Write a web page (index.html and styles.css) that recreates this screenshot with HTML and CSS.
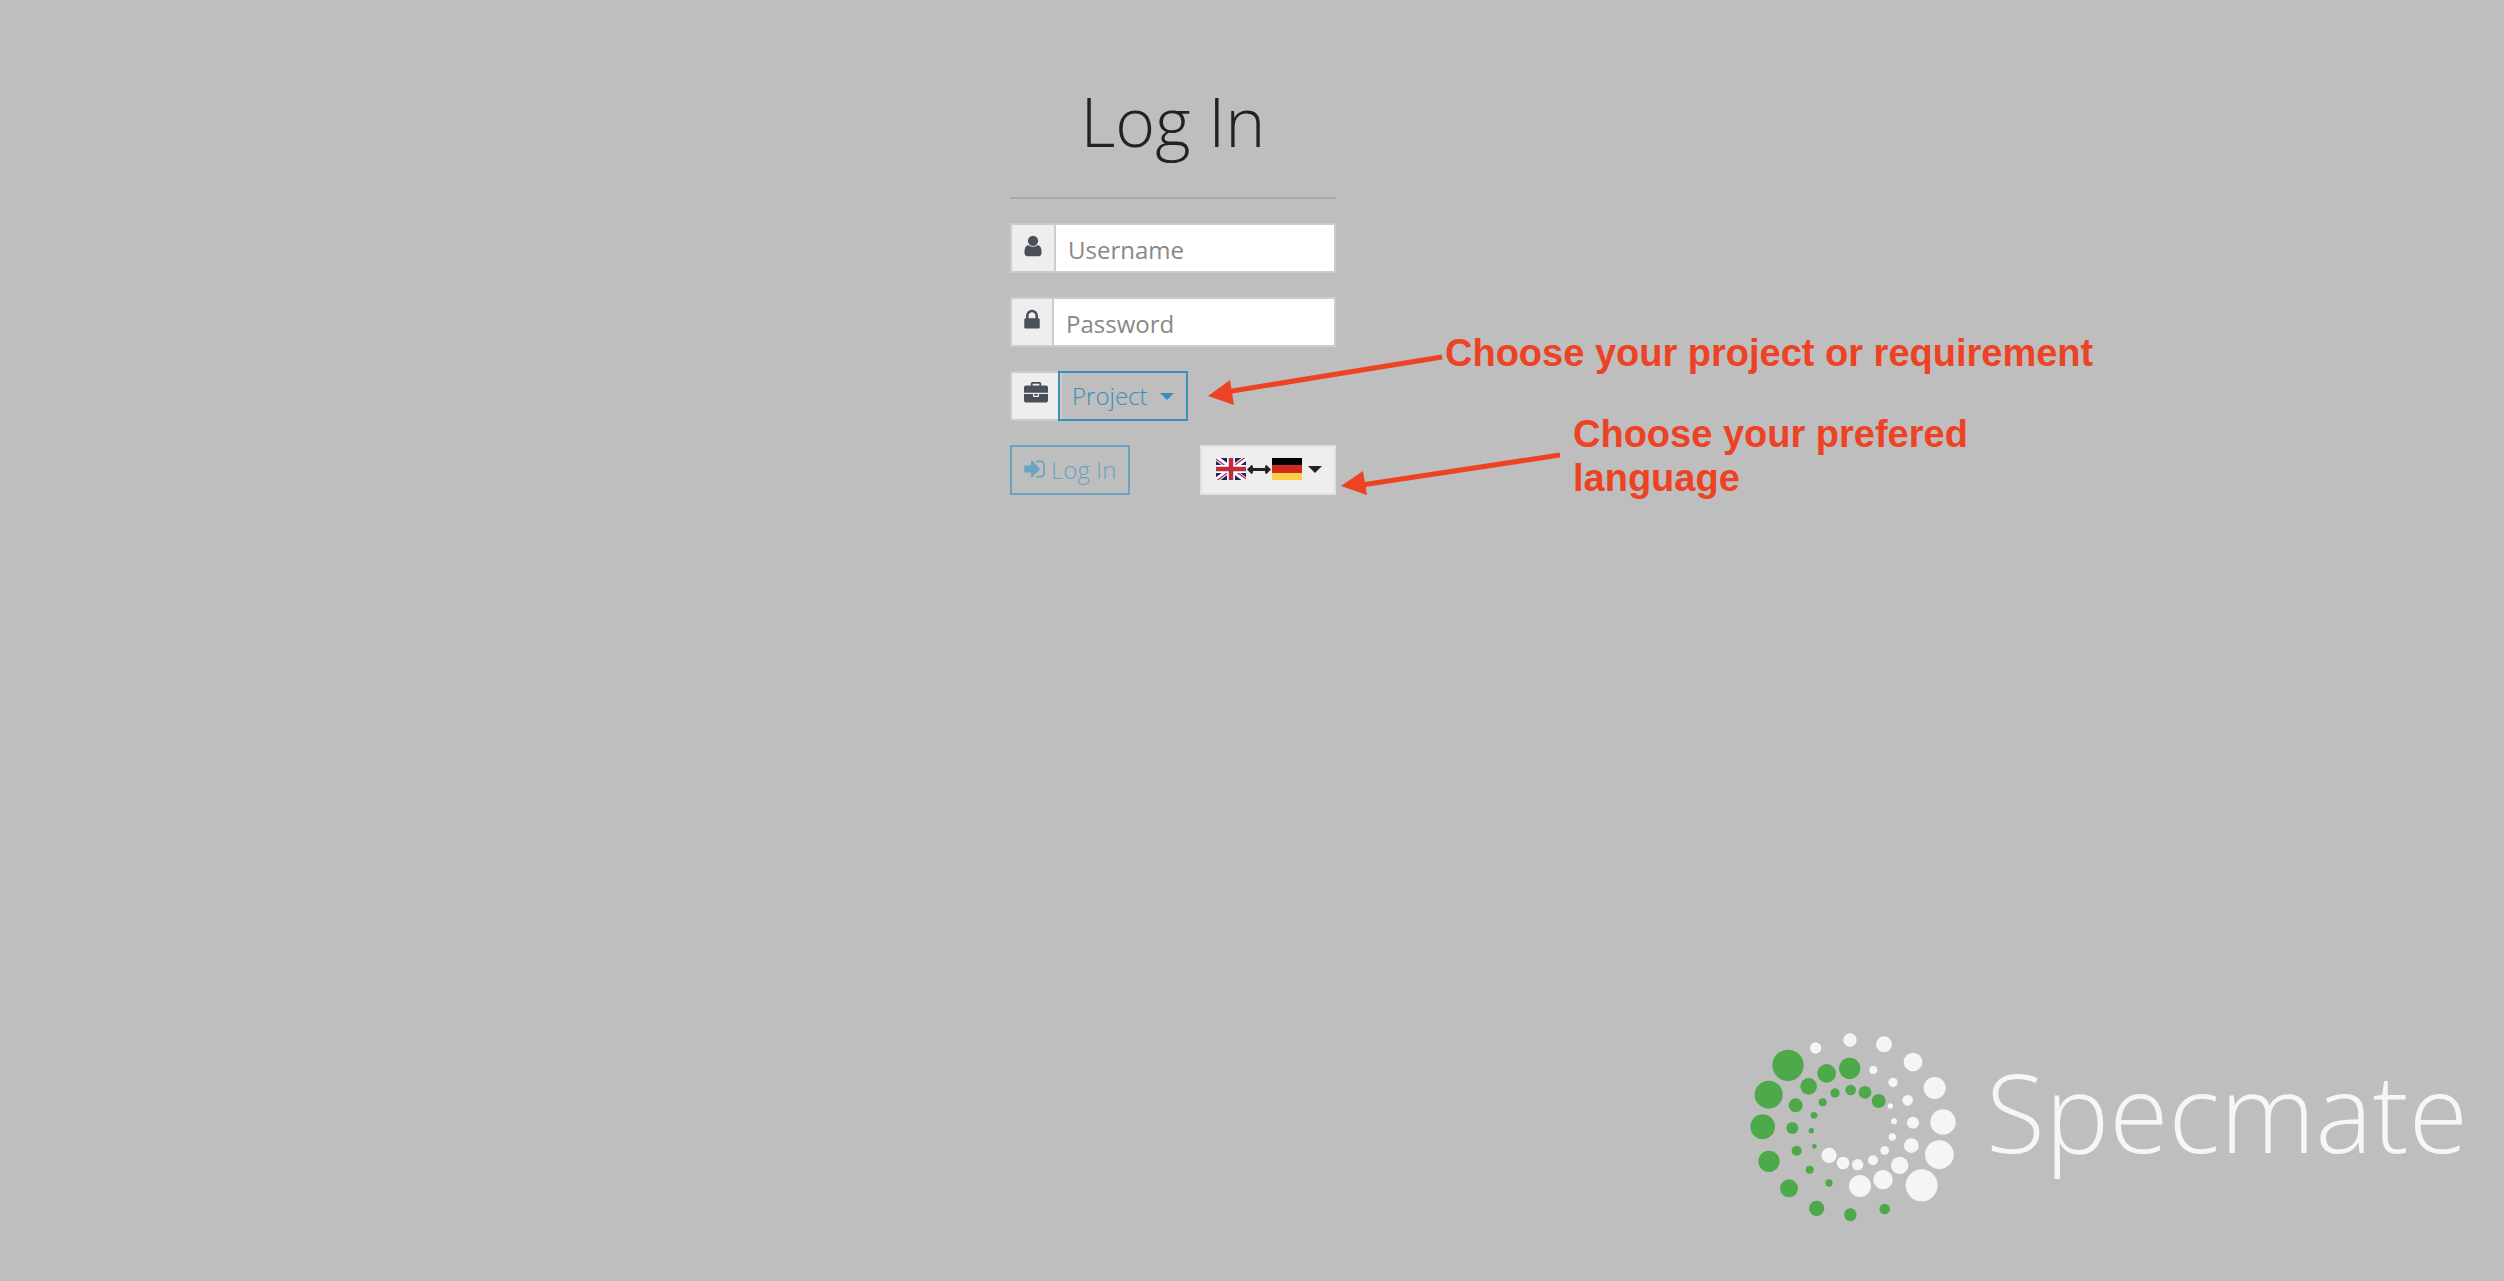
FILE: index.html
```html
<!DOCTYPE html>
<html lang="en">
<head>
<meta charset="utf-8">
<title>Specmate - Log In</title>
<link rel="stylesheet" href="styles.css">
</head>
<body>
<main class="page">
  <form class="login">
    <h1 class="login-title">Log In</h1>
    <div class="input-group">
      <label class="addon" for="username" aria-label="Username">
        <svg class="icon" width="18" height="24" viewBox="0 0 1280 1792" aria-hidden="true"><path d="M1280 1399q0 109-62.500 187t-150.500 78h-854q-88 0-150.500-78t-62.500-187q0-85 8.500-160.500t31.500-152 58.500-131 94-89 134.500-34.500q131 128 313 128t313-128q76 0 134.500 34.500t94 89 58.500 131 31.500 152 8.500 160.500zM1024 512q0 159-112.500 271.500t-271.500 112.500-271.500-112.500-112.500-271.500 112.500-271.500 271.500-112.500 271.500 112.500 112.500 271.500z"/></svg>
      </label>
      <input class="field" id="username" type="text" placeholder="Username">
    </div>
    <div class="input-group">
      <label class="addon" for="password" aria-label="Password">
        <svg class="icon" width="16" height="24" viewBox="0 0 1152 1792" aria-hidden="true"><path d="M320 768h512v-192q0-106-75-181t-181-75-181 75-75 181v192zM1152 864v576q0 40-28 68t-68 28h-960q-40 0-68-28t-28-68v-576q0-40 28-68t68-28h32v-192q0-184 132-316t316-132 316 132 132 316v192h32q40 0 68 28t28 68z"/></svg>
      </label>
      <input class="field" id="password" type="password" placeholder="Password">
    </div>
    <div class="input-group">
      <label class="addon" for="project" aria-label="Project">
        <svg class="icon" width="24" height="24" viewBox="0 0 1792 1792" aria-hidden="true"><path d="M640 256h512v-128h-512v128zM1792 896v480q0 66-47 113t-113 47h-1472q-66 0-113-47t-47-113v-480h672v160q0 26 19 45t45 19h320q26 0 45-19t19-45v-160h672zM1024 896v128h-256v-128h256zM1792 416v384h-1792v-384q0-66 47-113t113-47h352v-160q0-40 28-68t68-28h576q40 0 68 28t28 68v160h352q66 0 113 47t47 113z"/></svg>
      </label>
      <div class="project">
        <select class="project-select" id="project"><option>Project</option></select>
        <svg class="project-caret" width="14" height="7" viewBox="0 0 14 7" aria-hidden="true"><path d="M0 0h14l-7 7z"/></svg>
      </div>
    </div>
    <div class="actions">
      <button class="btn btn-login" type="submit" disabled>
        <svg class="icon" width="21" height="24" viewBox="0 0 1536 1792" aria-hidden="true"><path d="M1184 896q0 26-19 45l-544 544q-19 19-45 19t-45-19-19-45v-288h-448q-26 0-45-19t-19-45v-384q0-26 19-45t45-19h448v-288q0-26 19-45t45-19 45 19l544 544q19 19 19 45zM1536 544v704q0 119-84.500 203.500t-203.500 84.500h-320q-13 0-22.500-9.500t-9.500-22.500q0-4-1-20t-.5-26.500 3-23.500 10-19.500 20.500-6.500h320q66 0 113-47t47-113v-704q0-66-47-113t-113-47h-312l-11.500-1-11.500-3-8-5.500-7-9-2-13.500q0-4-1-20t-.5-26.500 3-23.500 10-19.500 20.500-6.500h320q119 0 203.500 84.500t84.500 203.500z"/></svg>
        <span>Log In</span>
      </button>
      <button class="btn btn-language" type="button" aria-label="Language">
        <svg width="30" height="22" viewBox="0 0 60 44" aria-hidden="true">
          <path fill="#0a2a70" d="M0 0h60v44H0z"/>
          <path stroke="#fff" stroke-width="10" d="M-2-2l64 48M62-2L-2 46"/>
          <path stroke="#c8374a" stroke-width="3" d="M0 2l26 19M58-1L34 17M60 42L34 23M2 45l24-18"/>
          <path stroke="#fff" stroke-width="16" d="M30 0v44M0 22h60"/>
          <path stroke="#bf2c3c" stroke-width="9" d="M30 0v44M0 22h60"/>
        </svg>
        <svg width="26" height="22" viewBox="0 0 26 22" aria-hidden="true"><path fill="#222" d="M1 11.500l4.500-4.500q1.500 0 1.500 3h12q0-3 1.500-3l4.500 4.500-4.500 4.500q-1.500 0-1.500-3H7q0 3-1.500 3z"/></svg>
        <svg width="30" height="22" viewBox="0 0 30 22" aria-hidden="true"><path d="M0 0h30v8H0z"/><path fill="#cf2b1e" d="M0 7h30v8H0z"/><path fill="#facf45" d="M0 15h30v7H0z"/></svg>
        <svg class="language-caret" width="14" height="7" viewBox="0 0 14 7" aria-hidden="true"><path fill="#222" d="M0 0h14l-7 7z"/></svg>
      </button>
    </div>
    <svg class="arrows" width="360" height="160" viewBox="0 0 360 160" aria-hidden="true">
      <path d="M20 53l222-36M155 146l205-31" stroke-width="5"/>
      <path class="arrow-head" d="M8 56l22-16 4 25zM141 146l22-15 4 24z"/>
    </svg>
    <p class="note note-project">Choose your project or requirement</p>
    <p class="note note-language">Choose your prefered<br>language</p>
  </form>
  <footer class="brand">
    <svg class="brand-mark" width="230" height="220" viewBox="0 0 690 660" aria-hidden="true">
      <g fill="#4ea94b">
        <circle cx="144" cy="139" r="47"/><circle cx="86" cy="227" r="42"/><circle cx="68" cy="323" r="37"/><circle cx="87" cy="427" r="32"/><circle cx="147" cy="508" r="27"/><circle cx="230" cy="568" r="23"/><circle cx="331" cy="587" r="19"/><circle cx="434" cy="570" r="16"/>
        <circle cx="329" cy="148" r="32"/><circle cx="260" cy="163" r="28"/><circle cx="206" cy="202" r="25"/><circle cx="167" cy="259" r="21"/><circle cx="157" cy="327" r="18"/><circle cx="170" cy="395" r="15"/><circle cx="209" cy="452" r="12"/><circle cx="267" cy="492" r="11"/>
        <circle cx="416" cy="246" r="21"/><circle cx="375" cy="220" r="19"/><circle cx="332" cy="213" r="16"/><circle cx="285" cy="222" r="14"/><circle cx="248" cy="250" r="12"/><circle cx="222" cy="289" r="10"/><circle cx="214" cy="335" r="8"/><circle cx="223" cy="382" r="7"/>
      </g>
      <g fill="#f5f5f5">
        <circle cx="227" cy="87" r="17"/><circle cx="330" cy="63" r="20"/><circle cx="432" cy="76" r="24"/><circle cx="519" cy="129" r="28"/><circle cx="584" cy="207" r="33"/><circle cx="609" cy="309" r="38"/><circle cx="598" cy="407" r="43"/><circle cx="545" cy="499" r="48"/>
        <circle cx="400" cy="153" r="12"/><circle cx="459" cy="190" r="14"/><circle cx="503" cy="244" r="16"/><circle cx="519" cy="311" r="18"/><circle cx="514" cy="380" r="22"/><circle cx="479" cy="439" r="26"/><circle cx="429" cy="482" r="29"/><circle cx="360" cy="501" r="33"/>
        <circle cx="451" cy="261" r="8"/><circle cx="462" cy="307" r="9"/><circle cx="457" cy="354" r="11"/><circle cx="434" cy="394" r="13"/><circle cx="399" cy="424" r="15"/><circle cx="353" cy="437" r="17"/><circle cx="309" cy="432" r="19"/><circle cx="267" cy="409" r="23"/>
      </g>
    </svg>
    <span class="brand-name">Specmate</span>
  </footer>
</main>
</body>
</html>
```

FILE: styles.css
```css
* {
  box-sizing: border-box;
}

body {
  margin: 0;
  background: #bebebe;
  color: #222;
  font-family: "Open Sans", sans-serif;
  font-size: 24px;
}

.page {
  display: flex;
  flex-direction: column;
  justify-content: space-between;
  min-height: 100vh;
}

/* Form column, a little left of centre */
.login {
  position: relative;
  display: flex;
  flex-direction: column;
  gap: 24px;
  width: 326px;
  margin-top: 72px;
  margin-left: calc(50% - 242px);
}

.login-title {
  margin: 0;
  padding-bottom: 28px;
  border-bottom: 2px solid #aaa;
  font-size: 68px;
  font-weight: 300;
  line-height: 97px;
  text-align: center;
}

.input-group {
  display: flex;
  height: 50px;
}

.addon {
  display: flex;
  align-items: center;
  padding: 0 12px 4px;
  border: 2px solid #ccc;
  background: #eee;
  color: #495057;
}

.icon {
  flex: none;
  fill: currentColor;
}

.field {
  flex: 1;
  min-width: 0;
  margin-left: -2px;
  padding: 2px 12px 0;
  border: 2px solid #ccc;
  border-radius: 0;
  background: #fff;
  color: #222;
  font: inherit;
}

.field::placeholder {
  color: #888;
  opacity: 1;
}

.project {
  position: relative;
  display: flex;
  margin-left: -4px;
}

.project-select {
  width: 130px;
  padding: 0 12px 2px;
  border: 2px solid #3b8fbd;
  border-radius: 0;
  appearance: none;
  background: transparent;
  color: #3b8fbd;
  font: inherit;
  font-weight: 300;
}

.project-caret {
  position: absolute;
  top: 22px;
  right: 14px;
  fill: #3b8fbd;
  pointer-events: none;
}

.actions {
  display: flex;
  justify-content: space-between;
}

.btn {
  display: flex;
  align-items: center;
  height: 50px;
  border: 2px solid;
  border-radius: 0;
  font: inherit;
  font-weight: 300;
}

.btn-login {
  gap: 6px;
  padding: 0 12px 2px;
  border-color: #6ba3c2;
  background: transparent;
  color: #6ba3c2;
}

.btn-language {
  padding: 0 12px 2px 14px;
  border-color: #e0e0e0;
  background: #eee;
}

.language-caret {
  margin-left: 6px;
}

/* Red notes that lie over the page beside the form */
.arrows {
  position: absolute;
  top: 268px;
  left: 190px;
  fill: none;
  stroke: #ed4224;
}

.arrow-head {
  fill: #ed4224;
  stroke: none;
}

.note {
  position: absolute;
  margin: 0;
  color: #ed4224;
  font-family: "Liberation Sans", Arial, sans-serif;
  font-size: 38px;
  font-weight: 700;
  line-height: 44px;
  white-space: nowrap;
}

.note-project {
  top: 259px;
  left: 435px;
}

.note-language {
  top: 340px;
  left: 563px;
}

.brand {
  display: flex;
  justify-content: flex-end;
  gap: 16px;
  padding: 40px 36px 42px 0;
}

.brand-name {
  color: #f6f6f6;
  font-size: 108px;
  font-weight: 300;
  line-height: 186px;
}
```
